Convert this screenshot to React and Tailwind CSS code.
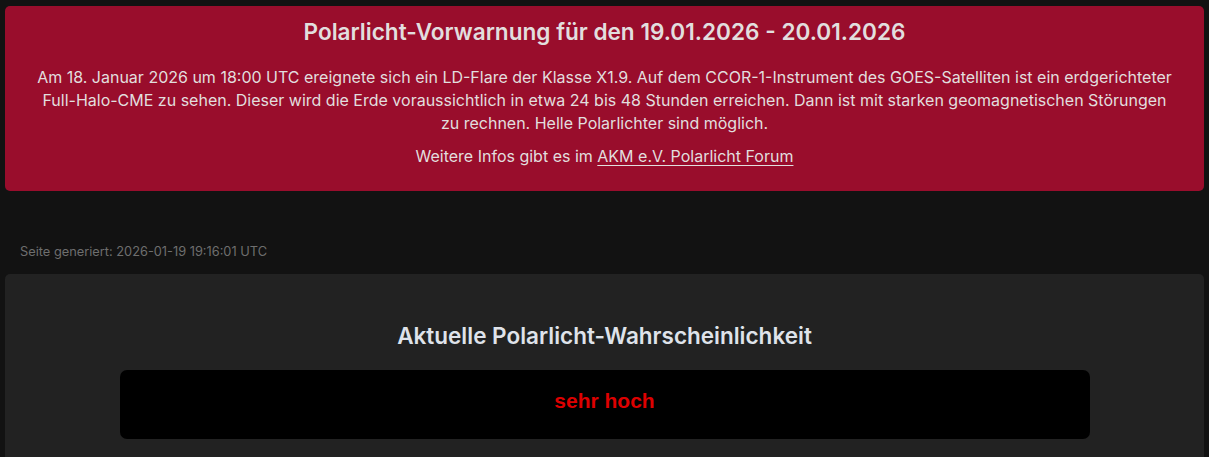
export default function App() {
  return (
    <div className="min-h-[457px] bg-[#121212] px-[5px] pt-[6px] font-['Inter',sans-serif]">
      <div className="rounded-[5px] bg-[#990d2c] px-6 pt-[12px] pb-[23px] text-center text-[#e2dede]">
        <h1 className="text-[22.6px] font-semibold leading-[28px]">
          Polarlicht-Vorwarnung für den 19.01.2026 - 20.01.2026
        </h1>
        <p className="mx-auto mt-[20px] max-w-[1140px] text-[16px] leading-[23px]">
          Am 18. Januar 2026 um 18:00 UTC ereignete sich ein LD-Flare der Klasse X1.9. Auf dem CCOR-1-Instrument des GOES-Satelliten ist ein erdgerichteter Full-Halo-CME zu sehen. Dieser wird die Erde voraussichtlich in etwa 24 bis 48 Stunden erreichen. Dann ist mit starken geomagnetischen Störungen zu rechnen. Helle Polarlichter sind möglich.
        </p>
        <p className="mt-[10px] text-[16px] leading-[23px]">
          Weitere Infos gibt es im{" "}
          <a href="#" className="underline underline-offset-[3px]">
            AKM e.V. Polarlicht Forum
          </a>
        </p>
      </div>
      <div className="mt-[52px] pl-[15px] text-[12.8px] leading-[17px] text-[#6e6e6e]">
        Seite generiert: 2026-01-19 19:16:01 UTC
      </div>
      <div className="mt-[14px] rounded-t-[5px] bg-[#222222] pt-[48px] pb-[20px] text-center">
        <h2 className="text-[22.5px] font-semibold leading-[28px] text-[#dfe3ea]">
          Aktuelle Polarlicht-Wahrscheinlichkeit
        </h2>
        <div className="mx-auto mt-[20px] flex h-[69px] w-[970px] items-center justify-center rounded-[7px] bg-black pb-[8px]">
          <span className="font-['Liberation_Sans',sans-serif] text-[21px] font-bold text-[#dd0000]">
            sehr hoch
          </span>
        </div>
      </div>
    </div>
  );
}
